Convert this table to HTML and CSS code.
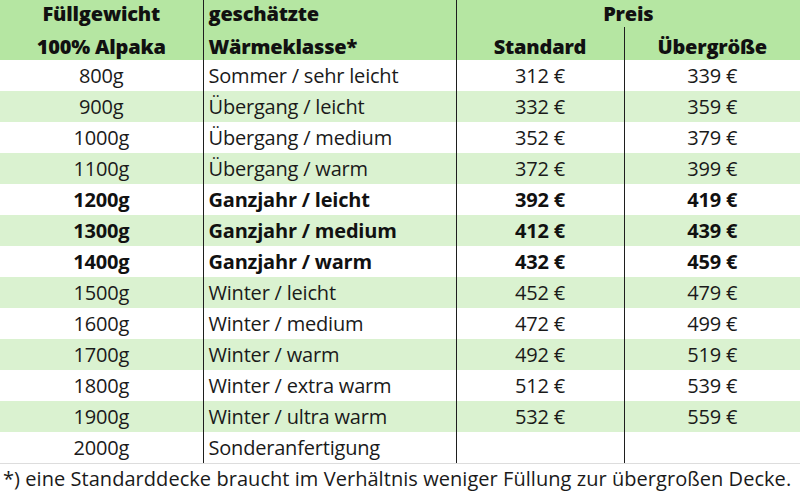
FILE: index.html
```html
<!DOCTYPE html>
<html lang="de">
<head>
<meta charset="utf-8">
<link rel="stylesheet" href="styles.css">
</head>
<body>
<table class="tbl">
  <colgroup>
    <col class="c1"><col class="c2"><col class="c3"><col class="c4">
  </colgroup>
  <thead>
    <tr class="h1">
      <th class="ctr">Füllgewicht</th>
      <th class="lft bl">geschätzte</th>
      <th class="ctr bl" colspan="2">Preis</th>
    </tr>
    <tr class="h2">
      <th class="ctr">100% Alpaka</th>
      <th class="lft bl">Wärmeklasse*</th>
      <th class="ctr bl">Standard</th>
      <th class="ctr bl">Übergröße</th>
    </tr>
  </thead>
  <tbody>
    <tr class="w"><td class="ctr">800g</td><td class="lft bl">Sommer / sehr leicht</td><td class="ctr bl">312 €</td><td class="ctr bl">339 €</td></tr>
    <tr class="g"><td class="ctr">900g</td><td class="lft bl">Übergang / leicht</td><td class="ctr bl">332 €</td><td class="ctr bl">359 €</td></tr>
    <tr class="w"><td class="ctr">1000g</td><td class="lft bl">Übergang / medium</td><td class="ctr bl">352 €</td><td class="ctr bl">379 €</td></tr>
    <tr class="g"><td class="ctr">1100g</td><td class="lft bl">Übergang / warm</td><td class="ctr bl">372 €</td><td class="ctr bl">399 €</td></tr>
    <tr class="w b"><td class="ctr">1200g</td><td class="lft bl">Ganzjahr / leicht</td><td class="ctr bl">392 €</td><td class="ctr bl">419 €</td></tr>
    <tr class="g b"><td class="ctr">1300g</td><td class="lft bl">Ganzjahr / medium</td><td class="ctr bl">412 €</td><td class="ctr bl">439 €</td></tr>
    <tr class="w b"><td class="ctr">1400g</td><td class="lft bl">Ganzjahr / warm</td><td class="ctr bl">432 €</td><td class="ctr bl">459 €</td></tr>
    <tr class="g"><td class="ctr">1500g</td><td class="lft bl">Winter / leicht</td><td class="ctr bl">452 €</td><td class="ctr bl">479 €</td></tr>
    <tr class="w"><td class="ctr">1600g</td><td class="lft bl">Winter / medium</td><td class="ctr bl">472 €</td><td class="ctr bl">499 €</td></tr>
    <tr class="g"><td class="ctr">1700g</td><td class="lft bl">Winter / warm</td><td class="ctr bl">492 €</td><td class="ctr bl">519 €</td></tr>
    <tr class="w"><td class="ctr">1800g</td><td class="lft bl">Winter / extra warm</td><td class="ctr bl">512 €</td><td class="ctr bl">539 €</td></tr>
    <tr class="g"><td class="ctr">1900g</td><td class="lft bl">Winter / ultra warm</td><td class="ctr bl">532 €</td><td class="ctr bl">559 €</td></tr>
    <tr class="w last"><td class="ctr">2000g</td><td class="lft bl">Sonderanfertigung</td><td class="ctr bl"></td><td class="ctr bl"></td></tr>
  </tbody>
</table>
<p class="note">*) eine Standarddecke braucht im Verhältnis weniger Füllung zur übergroßen Decke.</p>
</body>
</html>
```
FILE: styles.css
```css
html, body {
  margin: 0;
  padding: 0;
  background: #ffffff;
}
body {
  width: 800px;
  height: 491px;
  overflow: hidden;
  font-family: "Open Sans", "Lato", sans-serif;
  color: #1a1a1a;
}
.tbl {
  width: 800px;
  border-collapse: collapse;
  table-layout: fixed;
  font-size: 20px;
  font-weight: 500;
  letter-spacing: -0.2px;
}
.c1 { width: 203px; }
.c2 { width: 253px; }
.c3 { width: 168px; }
.c4 { width: 176px; }
.tbl th, .tbl td {
  padding: 0;
  white-space: nowrap;
  overflow: hidden;
}
.tbl thead tr {
  background: #b5e6a2;
}
.tbl th {
  font-weight: 800;
  color: #111;
}
.h1 { height: 24px; }
.h2 { height: 33px; }
.h2 th { padding-top: 5px; }
.tbl tbody tr { height: 31px; }
.w { background: #ffffff; }
.g { background: #daf2d0; }
.b td { font-weight: 700; color: #111; }
.ctr { text-align: center; }
.lft { text-align: left; }
.tbl .lft { padding-left: 5px; }
.bl { border-left: 1px solid #1e1e1e; }
.last td { border-bottom: 1px solid #dddddd; }
.note {
  margin: 0;
  padding: 1px 0 0 3px;
  font-size: 20px;
  font-weight: 500;
  letter-spacing: 0.05px;
  white-space: nowrap;
}
```
